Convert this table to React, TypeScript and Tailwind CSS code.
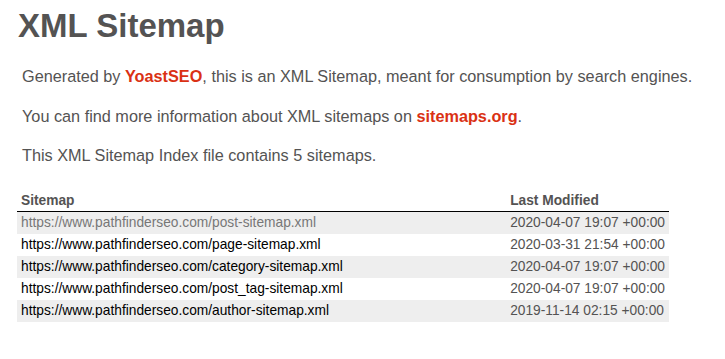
const rows = [
  { loc: "https://www.pathfinderseo.com/post-sitemap.xml", mod: "2020-04-07 19:07 +00:00", visited: true },
  { loc: "https://www.pathfinderseo.com/page-sitemap.xml", mod: "2020-03-31 21:54 +00:00" },
  { loc: "https://www.pathfinderseo.com/category-sitemap.xml", mod: "2020-04-07 19:07 +00:00" },
  { loc: "https://www.pathfinderseo.com/post_tag-sitemap.xml", mod: "2020-04-07 19:07 +00:00" },
  { loc: "https://www.pathfinderseo.com/author-sitemap.xml", mod: "2019-11-14 02:15 +00:00" },
];

export default function App() {
  return (
    <div className="min-h-[359px] bg-white pl-[17px] pt-[7px] text-[#545353] font-['Liberation_Sans',Arial,sans-serif]">
      {/* Header */}
      <h1 className="ml-px text-[33px] leading-[38px] font-bold">XML Sitemap</h1>

      {/* Explanation */}
      <div className="ml-[5px] mt-[22px] text-[16.25px] leading-[19.5px]">
        <p>
          Generated by{" "}
          <a href="#" className="font-bold text-[#da3114]">YoastSEO</a>, this is an XML Sitemap, meant for
          consumption by search engines.
        </p>
        <p className="mt-[20px]">
          You can find more information about XML sitemaps on{" "}
          <a href="#" className="font-bold text-[#da3114]">sitemaps.org</a>.
        </p>
        <p className="mt-[20px]">This XML Sitemap Index file contains 5 sitemaps.</p>
      </div>

      {/* Sitemap table */}
      <table className="mt-[24px] w-[652px] border-collapse text-[13.75px] whitespace-nowrap">
        <thead>
          <tr>
            <th className="w-[490px] border-b border-black px-[4px] text-left leading-[21px] font-bold">Sitemap</th>
            <th className="border-b border-black px-[4px] text-left leading-[21px] font-bold">Last Modified</th>
          </tr>
        </thead>
        <tbody>
          {rows.map((r, i) => (
            <tr key={r.loc} className={i % 2 === 0 ? "bg-[#eeeeee]" : ""}>
              <td className="px-[4px] leading-[22px]">
                <a href="#" className={r.visited ? "text-[#777777]" : "text-black"}>
                  {r.loc}
                </a>
              </td>
              <td className="px-[4px] leading-[22px]">{r.mod}</td>
            </tr>
          ))}
        </tbody>
      </table>
    </div>
  );
}
